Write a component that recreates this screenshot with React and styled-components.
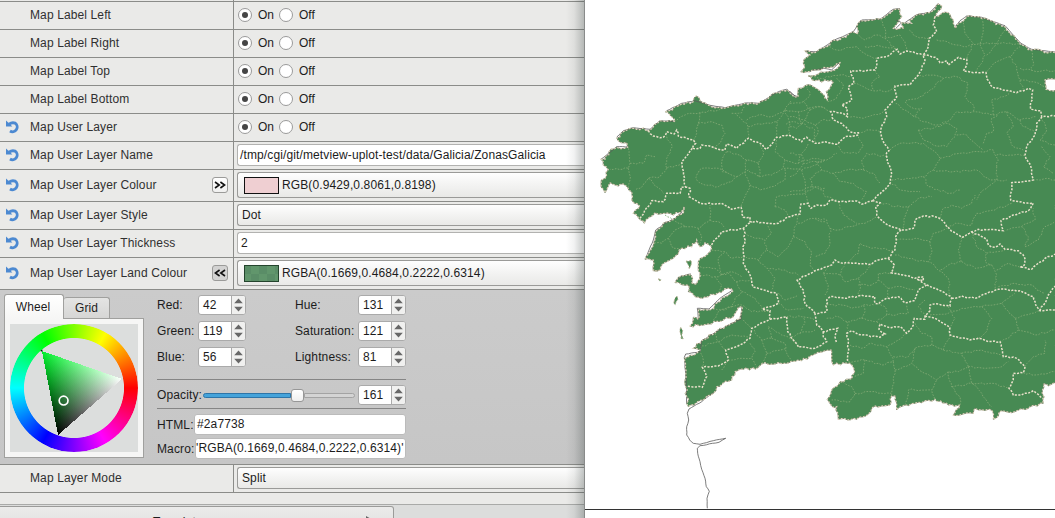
import React from "react";
import styled, { createGlobalStyle } from "styled-components";

const Global = createGlobalStyle`
  html, body { margin: 0; padding: 0; overflow: hidden; background: #fff; }
  * { box-sizing: border-box; }
`;

const Window = styled.div`
  display: flex;
  width: 1055px;
  height: 518px;
  overflow: hidden;
  font: 12px/16px "Liberation Sans", Arial, sans-serif;
  letter-spacing: 0.12px;
  color: #1c1c1c;
`;

const Sidebar = styled.div`
  position: relative;
  width: 585px;
  height: 518px;
  flex: none;
  overflow: hidden;
  display: flex;
  flex-direction: column;
  background: #eaeae8;
  border-right: 1px solid #898b8a;
`;

const EdgeShade = styled.div`
  position: absolute;
  top: 0;
  right: 0;
  width: 18px;
  height: 100%;
  background: linear-gradient(to right, rgba(60, 70, 68, 0), rgba(60, 70, 68, 0.07) 45%, rgba(60, 70, 68, 0.3));
`;

const Row = styled.div`
  display: flex;
  flex: none;
  height: ${(p) => p.$h || 28}px;
  border-bottom: 1px solid #8b8c89;
`;

const NameCell = styled.div`
  display: flex;
  align-items: center;
  width: 234px;
  padding: 0 5px 1px 6px;
  border-right: 1px solid #8b8c89;
  color: #303030;
`;

const ResetSlot = styled.div`
  width: 24px;
  height: 14px;
`;

const Label = styled.span`
  flex: 1;
  white-space: nowrap;
`;

const ValueCell = styled.div`
  flex: 1;
  display: flex;
  align-items: flex-start;
  padding: 2px 0 0 3px;
`;

const Toggle = styled.button`
  width: 16px;
  height: 16px;
  padding: 0;
  margin: 0;
  border: 1px solid #9b9b99;
  border-radius: 3px;
  background: ${(p) => (p.$open ? "#d3d3d2" : "linear-gradient(#fff, #f0f0ef)")};
  display: flex;
  align-items: center;
  justify-content: center;
`;

const RadioGroup = styled.div`
  display: flex;
  align-items: center;
  height: 22px;
  padding: 0 0 0 1px;
`;

const Radio = styled.span`
  display: flex;
  align-items: center;
  justify-content: center;
  width: 14px;
  height: 14px;
  border: 1px solid #9a9a9a;
  border-radius: 50%;
  background: #fff;
  &::after {
    content: "";
    width: 6px;
    height: 6px;
    border-radius: 50%;
    background: ${(p) => (p.$on ? "#454545" : "transparent")};
  }
`;

const RadioText = styled.span`
  width: 20px;
  margin: 0 0 0 6px;
  padding-right: 1px;
  flex: none;
  letter-spacing: 0;
  white-space: nowrap;
  & + * { margin-left: 1px; }
`;

const Field = styled.div`
  display: flex;
  align-items: center;
  flex: 1;
  height: ${(p) => p.$h || 22}px;
  padding-left: ${(p) => p.$pad ?? 4}px;
  border: 1px solid ${(p) => (p.$button ? "#9a9a98" : "#b2b2b0")};
  border-right: 0;
  border-radius: 3px 0 0 3px;
  background: ${(p) => (p.$button ? "linear-gradient(#fefefe, #f3f3f2 50%, #e9e9e7)" : "#fff")};
  white-space: nowrap;
`;

const Swatch = styled.span`
  width: 35px;
  height: 17px;
  margin-right: 3px;
  border: 1px solid ${(p) => (p.$checked ? "#24442d" : "#111")};
  background: ${(p) =>
    p.$checked ? "repeating-conic-gradient(#5a8d67 0 25%, #61966c 0 50%) 6px 0 / 16px 16px" : "#efcfd2"};
`;

const Editor = styled.div`
  display: flex;
  flex: none;
  height: 175px;
  padding: 5px 0 0 4px;
  background: linear-gradient(#cbcbcb, #c6c6c6);
  border-bottom: 1px solid #8b8c89;
`;

const WheelTabs = styled.div`
  width: 140px;
`;

const TabBar = styled.div`
  display: flex;
  align-items: flex-end;
  height: 23px;
`;

const Tab = styled.div`
  display: flex;
  align-items: center;
  justify-content: center;
  width: ${(p) => p.$w}px;
  height: ${(p) => (p.$active ? 25 : 21)}px;
  padding-right: ${(p) => (p.$active ? 2 : 0)}px;
  margin-bottom: ${(p) => (p.$active ? -1 : 0)}px;
  border: 1px solid #a0a09e;
  border-bottom: 0;
  border-left-width: ${(p) => (p.$active ? 1 : 0)}px;
  border-radius: 3px 3px 0 0;
  background: ${(p) => (p.$active ? "linear-gradient(#fff, #f6f6f5)" : "linear-gradient(#e4e4e3, #d6d6d5)")};
  position: relative;
`;

const WheelPane = styled.div`
  padding: 5px;
  height: 140px;
  border: 1px solid #a0a09e;
  background: #f6f6f5;
`;

const WheelBox = styled.div`
  display: grid;
  width: 128px;
  height: 128px;
  background: #dcdedd;
  & > * { grid-area: 1 / 1; }
`;

const HueRing = styled.div`
  border-radius: 50%;
  background: conic-gradient(from 90deg, #f00, #f0f, #00f, #0ff, #0f0, #ff0, #f00);
  mask: radial-gradient(circle, transparent 49.6px, #000 50.4px);
`;

const Controls = styled.div`
  width: 249px;
  margin-left: 13px;
  display: flex;
  flex-direction: column;
`;

const ControlRow = styled.div`
  display: flex;
  align-items: center;
  height: ${(p) => p.$h || 20}px;
  margin-bottom: ${(p) => p.$gap || 0}px;
`;

const ControlLabel = styled.span`
  width: ${(p) => p.$w}px;
  flex: none;
  white-space: nowrap;
`;

const Spin = styled.div`
  display: flex;
  width: 48px;
  height: 20px;
  flex: none;
  border: 1px solid #aaa;
  border-radius: 3px;
  background: #fff;
  overflow: hidden;
  margin-right: ${(p) => p.$after || 0}px;
`;

const SpinValue = styled.span`
  flex: 1;
  padding: 1px 0 0 4px;
  border-right: 1px solid #aaa;
`;

const SpinArrows = styled.svg`
  width: 13px;
  height: 18px;
  background: #f0f0ef;
`;

const Rule = styled.div`
  height: 1px;
  background: #858585;
  margin-bottom: ${(p) => p.$gap}px;
`;

const Slider = styled.div`
  display: flex;
  align-items: center;
  width: 152px;
  height: 20px;
  margin-right: 3px;
`;

const Groove = styled.div`
  width: ${(p) => p.$w}px;
  height: 5px;
  border: 1px solid ${(p) => (p.$filled ? "#2e75a8" : "#a3a3a3")};
  background: ${(p) => (p.$filled ? "#45a3da" : "#d4d4d4")};
  border-radius: ${(p) => (p.$filled ? "3px 0 0 3px" : "0 3px 3px 0")};
`;

const Knob = styled.div`
  width: 13px;
  height: 13px;
  border: 1px solid #979797;
  border-radius: 3px;
  background: linear-gradient(#fff, #efefef);
`;

const Entry = styled.div`
  flex: 1;
  height: 21px;
  padding: 1px 0 0 ${(p) => p.$pad}px;
  border: 1px solid #bbb;
  border-radius: 3px;
  background: #fff;
  white-space: nowrap;
`;

const Footer = styled.div`
  flex: 1;
  margin-top: 11px;
  padding-top: 1px;
  border-top: 1px solid #a9aaa8;
  background: #dcdddc;
`;

const TemplateButton = styled.div`
  display: flex;
  align-items: flex-start;
  width: 394px;
  height: 30px;
  padding: 7px 0 0 153px;
  border: 1px solid #9b9b99;
  border-left: 0;
  border-radius: 0 3px 0 0;
  background: linear-gradient(#ebebea, #dededd);
`;

const FooterArrow = styled.svg`
  width: 8px;
  height: 8px;
  margin: 2px 0 0 156px;
`;

const MapView = styled.svg`
  display: block;
  width: 470px;
  height: 518px;
  flex: none;
`;

const ResetIcon = () => (
  <svg width="14" height="14" viewBox="0 0 14 14">
    <path d="M3 4.2C4.6 3 6.8 2.2 9 3.1A4.5 4.5 0 1 1 4 11" fill="none" stroke="#4c89d1" strokeWidth="2.9" />
    <path d="M0 .5V6.4H6.4Z" fill="#4c89d1" />
  </svg>
);

const Chevrons = ({ open }) => (
  <svg width="12" height="10" viewBox="0 0 12 10">
    <path
      d={open ? "M5.6 2 1.4 5 5.6 8M11 2 6.8 5 11 8" : "M1 2 5.2 5 1 8M6.4 2 10.6 5 6.4 8"}
      fill="none"
      stroke="#111"
      strokeWidth="1.6"
    />
  </svg>
);

const Param = ({ name, reset, h, toggle, open, children }) => (
  <Row $h={h}>
    <NameCell>
      <ResetSlot>{reset && <ResetIcon />}</ResetSlot>
      <Label>{name}</Label>
      {toggle && (
        <Toggle $open={open}>
          <Chevrons open={open} />
        </Toggle>
      )}
    </NameCell>
    <ValueCell>{children}</ValueCell>
  </Row>
);

const OnOff = () => (
  <RadioGroup>
    <Radio $on />
    <RadioText>On</RadioText>
    <Radio />
    <RadioText>Off</RadioText>
  </RadioGroup>
);

const Spinner = ({ value, after }) => (
  <Spin $after={after}>
    <SpinValue>{value}</SpinValue>
    <SpinArrows viewBox="0 0 13 18">
      <path d="M2.2 7.2 6.5 2.4 10.8 7.2ZM2.2 10.8 6.5 15.6 10.8 10.8Z" fill="#686868" />
    </SpinArrows>
  </Spin>
);

const ColourWheel = () => (
  <WheelBox>
    <HueRing />
    <svg width="128" height="128" viewBox="0 0 128 128">
      <defs>
        <linearGradient id="hueRamp" gradientUnits="userSpaceOnUse" x1="32" y1="27" x2="80" y2="83">
          <stop offset="0" stopColor="#00f02c" />
          <stop offset="1" stopColor="#000" />
        </linearGradient>
        <linearGradient id="whiteRamp" gradientUnits="userSpaceOnUse" x1="112" y1="55" x2="40" y2="69">
          <stop offset="0" stopColor="#fff" />
          <stop offset="1" stopColor="#000" />
        </linearGradient>
      </defs>
      <g style={{ isolation: "isolate" }} shapeRendering="crispEdges">
        <path d="M32 27 112 55 48 111Z" fill="url(#hueRamp)" />
        <path d="M32 27 112 55 48 111Z" fill="url(#whiteRamp)" style={{ mixBlendMode: "plus-lighter" }} />
      </g>
      <path d="M22.5 16 32 27" stroke="#0a0a0a" strokeWidth="2" />
      <circle cx="53.6" cy="76.6" r="4.4" fill="none" stroke="#fff" strokeWidth="1.7" />
    </svg>
  </WheelBox>
);

/* Map geometry is digitised on four sheets at three units per pixel. */
const SHEETS = { a: [585, 80], b: [585, 270], c: [790, 0], d: [815, 190] };

const read = (text) => {
  const out = [];
  let origin = SHEETS.a;
  text.trim().split(/\s+/).forEach((token) => {
    if (SHEETS[token]) origin = SHEETS[token];
    else {
      const [x, y] = token.split(",").map(Number);
      out.push([origin[0] + x / 3, origin[1] + y / 3]);
    }
  });
  return out;
};

const noise = (x, y) => {
  const v = Math.sin(x * 12.9898 + y * 78.233) * 43758.5453;
  return v - Math.floor(v) - 0.5;
};

const trace = (text, rough, closed) => {
  const pts = read(text);
  if (closed) pts.push(pts[0]);
  let d = `M${pts[0][0].toFixed(1)} ${pts[0][1].toFixed(1)}`;
  for (let i = 1; i < pts.length; i += 1) {
    const [x0, y0] = pts[i - 1];
    const [x1, y1] = pts[i];
    const len = Math.hypot(x1 - x0, y1 - y0) || 1;
    const n = Math.max(1, Math.round(len / 3.2));
    for (let k = 1; k <= n; k += 1) {
      const t = k / n;
      const off = k < n ? noise(x0 + k, y1 - k) * rough : 0;
      const x = x0 + (x1 - x0) * t - ((y1 - y0) / len) * off;
      const y = y0 + (y1 - y0) * t + ((x1 - x0) / len) * off;
      d += `L${x.toFixed(1)} ${y.toFixed(1)}`;
    }
  }
  return closed ? `${d}Z` : d;
};

const LAND = `a 48,238 60,238 72,215 95,202 128,202 125,188 108,188 95,175 115,155 145,145 195,150 225,122 270,125 255,105
240,95 262,90 290,72 325,65 333,48 345,62 375,78 420,84 480,70 520,72 550,55 575,38 608,30 620,45 640,50 640,25
c 27,265 45,257 70,260 95,280 112,300 108,275 130,245 115,243 75,242 55,228 85,222 138,208 150,188 120,202 85,210 60,215 32,215
45,200 42,178 60,165 45,153 75,158 110,140 130,120 150,120 190,95 205,100 200,80 212,62 270,58 310,30 330,28 335,50
318,75 310,85 325,88 342,85 335,68 365,70 358,60 380,45 420,38 445,12 455,18 435,50 455,40 475,38 490,60 497,85 510,68
530,50 575,55 645,80 690,132 725,150 795,158 801,158 801,240 765,240 768,268 801,270
d 725,575 700,588 685,582 685,640 640,655 590,668 560,662 535,688 530,660 480,655 475,670 415,675 435,645 400,645 360,628
320,638 270,645 245,660 242,618 230,618 225,645 180,648 160,672 125,688 70,688 65,650 50,648 37,628 50,600 75,575
112,565 118,540 105,520 85,518 55,525 50,480 30,482
b 690,252 650,272 600,280 530,282 520,292 475,298 450,305 440,330 395,350 385,370 350,390 310,410 302,350 298,265
335,250 345,240 325,235 350,212 390,188 440,160 465,148 472,110 460,112 445,140 415,150 370,162 315,168 325,142 340,148
340,118 380,118 410,85 445,62 430,55 400,68 370,80 340,82 310,65 310,45 270,38 280,22 318,15 320,38 335,42 345,20
a 345,580 340,545 370,520 380,500 360,488 345,500 335,480 320,500 290,505 265,535 235,550 225,570 205,572 205,540 180,538
200,505 210,460 235,430 270,415 295,400 298,380 285,398 265,405 240,400 210,398 178,430 145,400 165,380 140,360 140,335
115,312 100,318 75,308 60,338 48,310 70,270 55,255`;

const ISLANDS = [
  "a 303,543 318,541 317,558 312,567 308,552",
  "b 268,92 276,78 279,88 271,104 266,100",
  "b 287,172 293,182 290,196 295,206 288,206 286,190",
  "b 205,0 222,1 214,3",
  "b 220,26 228,29 224,34",
];

const ZONES = [
  `a 190,152 205,168 235,172 245,155 268,162 275,150 280,168 325,180 332,190 322,205 345,205 350,195 420,210 425,192 455,205
   490,175 525,190 545,208 575,172 610,165 650,185 665,172 690,190 720,185 c 115,428 143,433 165,410 205,405 205,398 180,395
   155,370 130,360 122,335 160,340 172,350 172,325 155,315 185,300 175,260 192,250 182,213 255,210 262,175 300,165 322,148
   330,162 350,153 400,165`,
  `c 435,50 430,75 440,95 418,115 415,140 400,165 405,180 385,225 360,255 315,258 320,290 285,330 290,350 272,390 280,425
   297,452 288,465 305,525 298,555 250,600 d 175,32`,
  `c 400,165 435,172 450,188 470,182 475,195 505,172 530,178 530,195 520,212 550,218 588,218 592,238 608,262 680,278 715,265
   728,270 722,328 752,332 755,350 795,348`,
  `c 755,350 740,370 735,405 710,440 705,465 725,510 730,540 665,548 662,600 d 592,32 655,40 640,62 585,80 558,92 565,122
   490,118 470,125 440,142 395,110 380,90 360,80 325,78 300,90 295,115 258,120 210,100 185,75 182,50 195,38 175,32`,
  `d 470,125 515,148 520,165 540,172 555,162 570,178 610,182 628,200 628,225 615,232 650,238 690,205 720,192`,
  `d 258,120 242,140 240,180 220,205 190,210 170,222 75,218 60,210 50,225 0,242 b 635,30`,
  `d 220,205 238,225 228,248 300,265 325,260 325,272 305,268 335,285 370,300 405,318 410,325 405,348 370,342 345,345 345,362
   330,378 330,388 298,385 295,405 275,430 255,410 220,412 195,402 192,418 210,432 195,442 140,435 110,422 95,430 100,460 98,515`,
  `d 410,325 440,318 480,325 550,298 615,302 655,320 662,345 675,362 720,360`,
  `d 675,362 710,300 722,288`,
  `d 335,285 310,300 298,332 270,338 250,320 215,325 190,342 180,340 180,320 130,318 95,325 45,320 35,330 35,365 0,372 5,405
   25,425 68,415 60,440 65,460`,
  `d 25,425 25,440 35,455 0,475 b 640,230`,
  `d 330,378 360,385 405,412 405,435 465,450 490,445 520,455 555,455 565,500 605,505 630,530 625,548 595,550 595,570 582,595
   595,615 620,615 655,602 685,625`,
  `a 165,415 200,362 235,365 245,340 285,340 288,322 315,325 312,350 345,370 410,370 440,388 468,382 475,412 495,412 495,425
   580,430 610,410 645,402 648,372 670,370 678,385 695,375 d 35,45 45,30 75,35 125,33 140,42 175,32`,
  `a 322,205 290,245 302,322`,
  `a 380,495 410,455 475,445 500,425`,
  `a 475,445 480,460 475,510 475,550 500,600 b 505,52 575,70 580,100 532,118 555,122 555,148 500,175 495,205 465,225 422,240
   430,270 400,288 352,292 365,320 352,352 305,348`,
  `b 555,148 605,140 608,185 625,210 640,230`,
  `b 635,30 655,60 660,100 690,130`,
];

const PARISHES = [
  "a 268,125 300,105 345,98 400,90 420,84",
  "a 345,98 340,130 335,160 325,180",
  "a 340,130 380,125 410,135 420,160 405,190 385,205",
  "a 440,100 470,98 480,78",
  "a 455,105 485,130 490,175",
  "a 485,120 520,105 560,110 600,90 620,60",
  "a 490,140 540,130 575,125 600,90 640,95 690,80 720,85",
  "a 600,90 615,130 610,165",
  "a 575,125 575,150 575,172",
  "a 640,95 650,130 690,150 690,190",
  "a 650,130 620,125 600,135",
  "a 245,170 262,200 245,235 245,265 290,250",
  "a 130,205 135,250 130,265 75,268",
  "a 135,250 175,250 185,225 210,230",
  "a 130,265 135,300 130,320",
  "a 245,265 225,290 190,295 165,325 150,330",
  "a 190,295 215,320 235,340",
  "a 335,285 350,265 400,265 430,280 455,290 440,305 400,320 360,315 335,300 335,285",
  "a 425,215 410,245 412,275 430,280",
  "a 425,215 455,222 485,240 520,250 535,225 525,190",
  "a 455,290 490,270 520,290 560,285 600,265 650,270 720,240",
  "a 485,240 480,275 495,315 480,350 468,382",
  "a 520,250 525,270 520,290",
  "a 575,180 570,215 600,240 640,250 650,220 670,190",
  "a 600,240 595,265",
  "a 640,250 680,235 720,240",
  "a 570,380 575,350 610,345 660,340 690,320 720,325",
  "a 650,270 660,300 660,340 670,370",
  "a 495,315 525,330 560,320 600,300 600,265",
  "a 570,380 600,390 610,410",
  "a 240,405 265,420 300,440 340,445 375,420 375,375",
  "a 300,440 270,450 250,475 230,490 205,490",
  "a 250,475 265,505 290,505",
  "a 340,445 350,470 345,490",
  "a 375,420 400,425 420,445",
  "a 480,460 510,475 540,480 545,510 520,540 480,530",
  "a 545,430 560,460 540,480",
  "a 545,510 580,530 610,500 625,470 640,405",
  "a 520,540 545,565 600,570 640,585",
  "a 625,470 660,485 680,520 675,555 690,575",
  "a 640,430 680,415 720,425",
  "a 380,510 420,515 440,535 475,530",
  "a 345,560 390,565 410,585 440,575 470,590",
  "a 410,585 400,535 420,515",
  "b 345,15 390,20 430,10 455,35 500,30",
  "b 400,68 410,45 390,20",
  "b 455,35 470,65 450,85 440,110 400,120 380,118",
  "b 470,65 510,85 532,118",
  "b 440,110 470,105 500,125 555,122",
  "b 385,150 400,125 440,110",
  "b 475,150 500,175",
  "b 390,190 400,215 422,240",
  "b 345,235 370,220 400,215 440,195 495,200",
  "b 345,240 355,270 352,292",
  "b 410,300 430,270 470,265 500,265 515,290",
  "b 500,175 530,210 560,205 550,170",
  "b 495,220 510,245 500,265",
  "b 530,280 545,250 530,210",
  "b 550,170 590,195 625,210",
  "b 560,205 600,220 605,250 620,275",
  "b 545,250 605,235",
  "b 580,70 600,90 640,75",
  "b 580,100 610,120 655,115",
  "b 550,0 570,25 560,60",
  "b 605,140 650,140 690,150",
  "b 645,190 660,160 655,140",
  "b 640,230 620,200 645,190 690,180",
  "c 55,228 90,235 150,225 182,230",
  "c 110,140 140,150 200,140 230,165 262,175",
  "c 200,100 225,120 260,105 285,115 318,148",
  "c 270,58 285,85 285,115",
  "c 285,115 330,105 345,125 350,153",
  "c 225,140 270,138 318,148",
  "c 358,90 380,110 418,115",
  "c 440,120 480,130 530,140 570,130 630,130 690,132",
  "c 520,68 525,100 550,130 530,178",
  "c 575,55 580,90 570,130 585,165 560,215",
  "c 645,90 620,130 590,165",
  "c 590,215 620,185 660,170 690,140",
  "c 660,170 680,200 690,240 700,268",
  "c 690,205 740,215 800,210",
  "c 725,150 730,185 725,212",
  "c 690,240 730,245 765,260",
  "c 380,230 430,225 460,235 500,230 535,250 525,290 550,315 550,335",
  "c 460,235 420,270 390,290 345,305 370,325 395,325 370,350",
  "c 317,310 345,330 375,350 400,365 440,375",
  "c 440,375 480,360 500,335 550,335 610,345 650,335 690,360 740,350",
  "c 385,390 430,385 470,370 500,385 495,410 470,440 430,435 400,420 385,390",
  "c 300,450 330,430 400,430 440,460 450,475 430,510 400,530",
  "c 450,475 510,460 570,455 610,450 625,480 620,500",
  "c 500,405 530,405 560,435 580,450",
  "c 580,430 590,400 610,395 605,355 625,345",
  "c 610,345 605,300 640,290 660,278",
  "c 650,335 670,380 650,400 670,440 700,450",
  "c 690,360 700,380 735,395",
  "c 620,465 660,465 705,465",
  "c 430,510 490,515 560,510 600,540 650,540",
  "c 305,540 350,535 400,530 415,560 480,580 510,570",
  "c 620,500 620,540 580,570 560,600",
  "c 300,545 330,570 390,575",
  "c 755,440 780,470 760,500 790,520",
  "c 730,540 770,535 795,540",
  "c 755,350 770,390 750,420 795,435",
  "c 0,310 40,305 60,330 45,360 75,375 95,360 122,360",
  "c 40,305 60,285 50,260",
  "c 60,330 90,320 110,330 122,335",
  "c 75,375 85,395 70,420",
  "c 0,350 45,360 20,385 0,380",
  "c 140,235 160,255 150,280 130,300 110,305",
  "c 192,250 240,270 290,275 315,262",
  "c 255,210 270,230 245,250 250,270",
  "c 172,350 220,355 280,335",
  "c 205,400 230,390 270,395",
  "c 205,410 220,440 200,460 160,460 143,433",
  "c 0,460 35,465 40,490 80,485 110,480 140,460",
  "c 40,490 20,520 0,530",
  "c 80,485 95,510 130,520 170,510 220,510 250,520 270,550",
  "c 95,510 60,535 65,560 100,570 105,590 140,600",
  "c 220,510 215,480 230,460 290,470",
  "c 130,520 150,545 190,550 230,575 215,600",
  "c 0,575 40,570 65,560",
  "d 0,85 35,90 45,115 45,160 30,190 0,200",
  "d 45,115 70,120 100,110 150,100 185,80",
  "d 70,35 85,75 110,90 125,100",
  "d 100,215 130,190 135,160 170,175 240,180",
  "d 195,38 240,50 280,50 310,25 350,20",
  "d 280,50 270,80 265,118",
  "d 375,85 380,60 410,45 440,55 470,40 480,15",
  "d 395,110 430,100 470,105 485,70 540,60 590,40",
  "d 245,150 300,145 345,155 355,130 395,115",
  "d 345,155 350,190 340,215 380,245 400,265 405,318",
  "d 240,195 300,210 340,215",
  "d 440,142 430,180 440,215 400,225 375,240",
  "d 440,215 480,235 530,225 545,255 540,298",
  "d 470,125 485,170 515,190 510,215 530,225",
  "d 515,190 570,180",
  "d 545,240 580,220 615,232",
  "d 550,290 600,280 650,285 665,300 690,310",
  "d 575,120 620,110 640,140 630,170",
  "d 630,170 670,150 690,110 720,95",
  "d 620,110 660,90 655,55",
  "d 45,225 25,250 40,285 30,315",
  "d 90,220 75,255 90,275 130,265 135,300 130,318",
  "d 130,265 155,240 170,222",
  "d 25,250 75,255",
  "d 130,285 170,285 190,270 190,250 228,248",
  "d 190,270 220,295 215,325",
  "d 220,295 260,290 300,300",
  "d 35,345 80,345 110,355 145,345 180,345",
  "d 35,385 70,380 95,395 140,385 150,365 145,345",
  "d 95,395 100,422",
  "d 140,385 185,395 215,375 280,370 275,345",
  "d 185,395 195,402",
  "d 215,375 210,350 190,342",
  "d 330,330 310,350 330,378",
  "d 400,350 420,385 405,412",
  "d 345,375 400,370 440,355 500,350 560,340 600,310",
  "d 500,350 530,385 510,430 490,445",
  "d 560,340 600,385 610,420 560,455",
  "d 610,420 660,435 720,420",
  "d 600,385 650,370 675,362",
  "d 105,465 140,475 170,460 215,470 250,450 275,430",
  "d 100,515 150,510 200,525 235,515 240,540 230,618",
  "d 215,470 235,515",
  "d 235,500 280,500 300,475 350,465 385,480 440,490 460,530 430,545 400,545 365,570 350,600 360,628",
  "d 300,475 290,520 320,545 365,570",
  "d 240,540 290,520",
  "d 300,400 320,430 350,440 350,465",
  "d 385,480 405,435",
  "d 440,490 500,480 560,495",
  "d 460,530 510,535 560,530 580,515",
  "d 400,545 410,590 435,620 435,645",
  "d 460,530 470,580 500,610 530,650",
  "d 410,590 470,580 530,580 582,595",
  "d 75,575 110,590 120,610 105,635 50,630",
  "d 120,610 170,605 228,610",
  "d 150,510 145,550 118,560",
  "d 270,645 280,600 350,600",
  "d 625,548 660,555 720,545",
  "d 630,530 655,500 690,490 690,450",
];

const COAST = [
  "b 298,262 302,252 345,246 350,212 390,188 440,160 468,148 470,112",
  "b 340,148 337,115 372,117 405,85 440,62",
  "b 270,35 290,18 318,12",
  "b 298,262 304,350 305,400",
  "b 385,368 350,395 312,417 307,430 311,450 305,470 305,495 314,510 325,520 345,523 385,512 422,505 402,517 345,527 337,535 338,550 345,575 350,598 360,625 364,650 373,664 366,685 367,715",
  "a 182,535 205,480 212,450 240,430 270,415 292,395",
  "a 48,238 95,200 130,200",
  "a 95,172 115,152 145,143 195,148 225,122 268,124",
  "a 245,92 290,70 330,62 375,76 420,83 480,69 520,70 550,53 580,35 605,28 625,45 638,50",
  "c 0,275 20,293",
  "c 45,155 80,155 130,122 190,95 203,75 215,60 270,58 310,28 330,26",
  "c 60,212 100,205 125,210 148,188",
  "c 318,85 335,68 318,60",
  "c 345,68 380,44 420,37 445,10",
  "c 495,80 510,62 530,48 575,52 645,77 690,128 725,148 795,156",
];

const GaliciaMap = () => (
  <MapView viewBox="585 0 470 518">
    <rect x="585" width="470" height="518" fill="#fff" />
    <path d={trace(LAND, 2.8, true)} fill="#478a53" />
    {ISLANDS.map((t) => (
      <path key={t} d={trace(t, 1.5, true)} fill="#478a53" stroke="#b9ae90" strokeWidth="0.9" strokeDasharray="1.5 1.5" />
    ))}
    <g fill="none" stroke="#80a873" strokeWidth="0.9" strokeDasharray="1.6 1.4">
      {PARISHES.map((t) => (
        <path key={t} d={trace(t, 2)} />
      ))}
    </g>
    <g fill="none" stroke="#5c5c5c" strokeWidth="0.8">
      {COAST.map((t) => (
        <path key={t} d={trace(t, 0.5)} />
      ))}
    </g>
    <path d={trace(LAND, 2.8, true)} fill="none" stroke="#6f765e" strokeWidth="0.8" />
    <path d={trace(LAND, 2.8, true)} fill="none" stroke="#ded5bd" strokeWidth="1.2" strokeDasharray="1.7 1.7" />
    <g fill="none" stroke="#e9e0ca" strokeWidth="1.5" strokeDasharray="2.1 1.4">
      {ZONES.map((t) => (
        <path key={t} d={trace(t, 1.6)} />
      ))}
    </g>
    <path d="M585 509.5H1055" stroke="#333" strokeWidth="1.2" />
  </MapView>
);

export default function App() {
  return (
    <Window>
      <Global />
      <Sidebar>
        <Row $h={2}>
          <NameCell />
        </Row>
        <Param name="Map Label Left"><OnOff /></Param>
        <Param name="Map Label Right"><OnOff /></Param>
        <Param name="Map Label Top"><OnOff /></Param>
        <Param name="Map Label Bottom"><OnOff /></Param>
        <Param name="Map User Layer" reset><OnOff /></Param>
        <Param name="Map User Layer Name" reset>
          <Field $pad={2}>/tmp/cgi/git/metview-uplot-test/data/Galicia/ZonasGalicia</Field>
        </Param>
        <Param name="Map User Layer Colour" reset h={32} toggle>
          <Field $button $h={26} $pad={6}>
            <Swatch />
            RGB(0.9429,0.8061,0.8198)
          </Field>
        </Param>
        <Param name="Map User Layer Style" reset>
          <Field $button>Dot</Field>
        </Param>
        <Param name="Map User Layer Thickness" reset>
          <Field $pad={3}>2</Field>
        </Param>
        <Param name="Map User Layer Land Colour" reset h={32} toggle open>
          <Field $button $h={26} $pad={6}>
            <Swatch $checked />
            RGBA(0.1669,0.4684,0.2222,0.6314)
          </Field>
        </Param>
        <Editor>
          <WheelTabs>
            <TabBar>
              <Tab $w={60} $active>Wheel</Tab>
              <Tab $w={46}>Grid</Tab>
            </TabBar>
            <WheelPane>
              <ColourWheel />
            </WheelPane>
          </WheelTabs>
          <Controls>
            <ControlRow $gap={6}>
              <ControlLabel $w={41}>Red:</ControlLabel>
              <Spinner value="42" after={49} />
              <ControlLabel $w={63}>Hue:</ControlLabel>
              <Spinner value="131" />
            </ControlRow>
            <ControlRow $gap={6}>
              <ControlLabel $w={41}>Green:</ControlLabel>
              <Spinner value="119" after={49} />
              <ControlLabel $w={63}>Saturation:</ControlLabel>
              <Spinner value="121" />
            </ControlRow>
            <ControlRow $gap={12}>
              <ControlLabel $w={41}>Blue:</ControlLabel>
              <Spinner value="56" after={49} />
              <ControlLabel $w={63}>Lightness:</ControlLabel>
              <Spinner value="81" />
            </ControlRow>
            <Rule $gap={5} />
            <ControlRow $gap={3}>
              <ControlLabel $w={46}>Opacity:</ControlLabel>
              <Slider>
                <Groove $w={88} $filled />
                <Knob />
                <Groove $w={51} />
              </Slider>
              <Spinner value="161" />
            </ControlRow>
            <Rule $gap={5} />
            <ControlRow $h={21} $gap={3}>
              <ControlLabel $w={37}>HTML:</ControlLabel>
              <Entry $pad={2}>#2a7738</Entry>
            </ControlRow>
            <ControlRow $h={21}>
              <ControlLabel $w={38}>Macro:</ControlLabel>
              <Entry $pad={0}>'RGBA(0.1669,0.4684,0.2222,0.6314)'</Entry>
            </ControlRow>
          </Controls>
        </Editor>
        <Param name="Map Layer Mode">
          <Field $button>Split</Field>
        </Param>
        <Footer>
          <TemplateButton>
            Templates
            <FooterArrow viewBox="0 0 8 8">
              <path d="M1 0 8 4 1 8Z" fill="#666" />
            </FooterArrow>
          </TemplateButton>
        </Footer>
        <EdgeShade />
      </Sidebar>
      <GaliciaMap />
    </Window>
  );
}
